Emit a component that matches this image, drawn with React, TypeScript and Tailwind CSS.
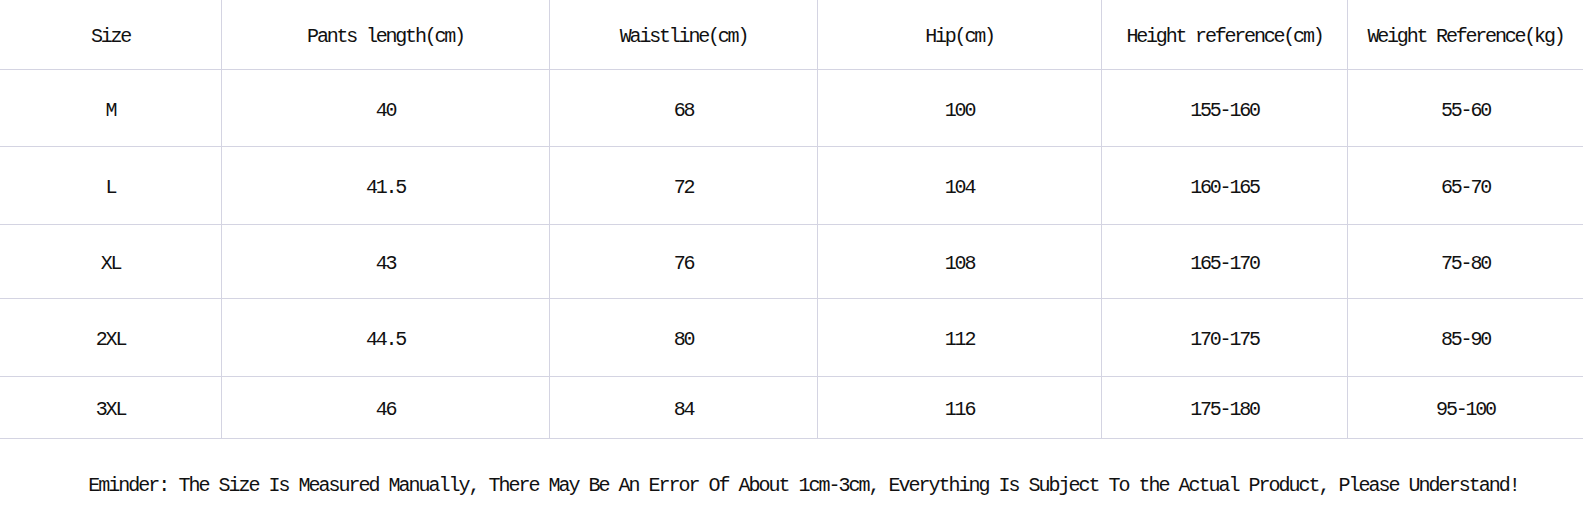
const headers = [
  "Size",
  "Pants length(cm)",
  "Waistline(cm)",
  "Hip(cm)",
  "Height reference(cm)",
  "Weight Reference(kg)",
];

const rows = [
  { h: "h-[77px]", cells: ["M", "40", "68", "100", "155-160", "55-60"] },
  { h: "h-[78px]", cells: ["L", "41.5", "72", "104", "160-165", "65-70"] },
  { h: "h-[74px]", cells: ["XL", "43", "76", "108", "165-170", "75-80"] },
  { h: "h-[78px]", cells: ["2XL", "44.5", "80", "112", "170-175", "85-90"] },
  { h: "h-[62px]", cells: ["3XL", "46", "84", "116", "175-180", "95-100"] },
];

function Row({ cells, h }: { cells: string[]; h: string }) {
  return (
    <div
      className={`grid grid-cols-[221px_328px_268px_284px_246px_1fr] border-b border-[#d4d4e2] ${h}`}
    >
      {cells.map((c, i) => (
        <div
          key={i}
          className={`flex items-center justify-center pt-[5px] ${i > 0 ? "border-l border-[#d4d4e2]" : ""}`}
        >
          {c}
        </div>
      ))}
    </div>
  );
}

export default function App() {
  return (
    <div className="w-[1583px] h-[523px] bg-white text-[#111] font-['Liberation_Mono',monospace] text-[20px] tracking-[-2.2px]">
      <Row cells={headers} h="h-[70px]" />
      {rows.map((r, i) => (
        <Row key={i} cells={r.cells} h={r.h} />
      ))}
      <div className="flex h-[84px] items-center justify-center pt-[10px] pl-[24px] tracking-[-2px]">
        Eminder: The Size Is Measured Manually, There May Be An Error Of About 1cm-3cm, Everything Is Subject To the Actual Product, Please Understand!
      </div>
    </div>
  );
}
